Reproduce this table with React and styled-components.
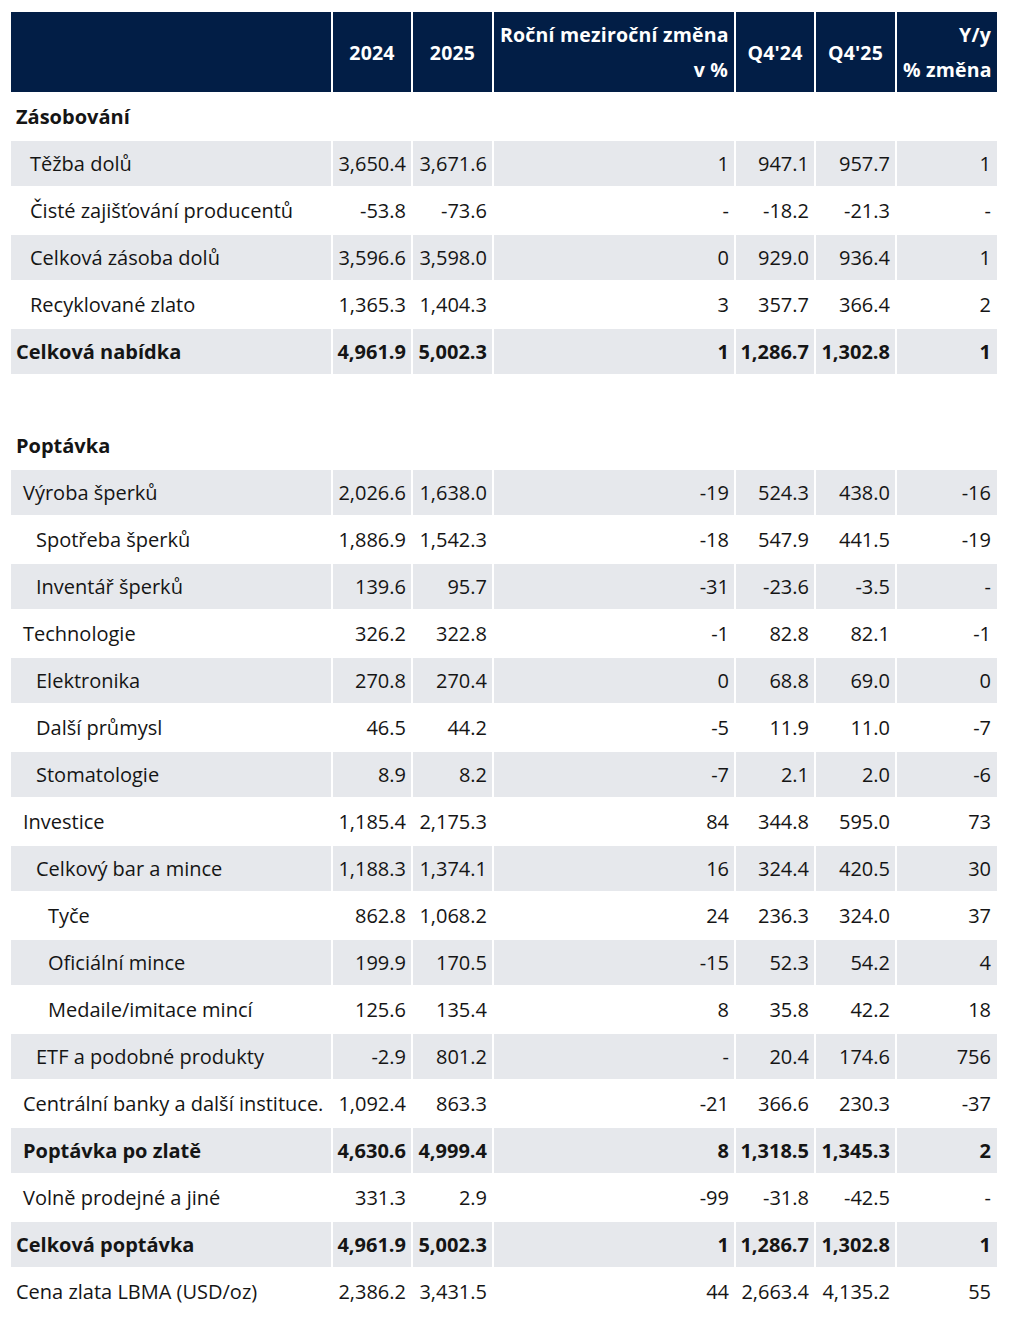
import styled, { createGlobalStyle } from "styled-components";

const GlobalStyle = createGlobalStyle`
  body {
    margin: 0;
    background: #ffffff;
    font-family: "Open Sans", "Noto Sans", sans-serif;
    color: #151515;
  }
`;

const Wrapper = styled.div`
  padding: 10px 0 0 9px;
`;

const Table = styled.table`
  width: 990px;
  table-layout: fixed;
  border-collapse: separate;
  border-spacing: 2px;
  font-size: 20px;
`;

const HeadCell = styled.th`
  height: 80px;
  padding: 0 6px;
  background: #021e46;
  color: #ffffff;
  font-weight: 700;
  font-size: 19.5px;
  letter-spacing: 0.2px;
  line-height: 35px;
  white-space: nowrap;
  text-align: ${(p) => p.$align || "center"};
  vertical-align: middle;
`;

const Row = styled.tr`
  td {
    background: ${(p) => (p.$shaded ? "#e6e8ec" : "#ffffff")};
    font-weight: ${(p) => (p.$bold ? 700 : 400)};
  }
`;

const Label = styled.td`
  height: 45px;
  padding: 0 0 0 ${(p) => 5 + (p.$indent || 0)}px;
  white-space: nowrap;
  vertical-align: middle;
`;

const Num = styled.td`
  padding: 0 ${(p) => p.$pad || 5}px 0 0;
  text-align: right;
  white-space: nowrap;
  vertical-align: middle;
`;

const widths = [320, 78, 79, 240, 78, 79, 100];

const rows = [
  { label: "Zásobování", bold: true, section: true },
  { label: "Těžba dolů", indent: 14, shaded: true, v: ["3,650.4", "3,671.6", "1", "947.1", "957.7", "1"] },
  { label: "Čisté zajišťování producentů", indent: 14, v: ["-53.8", "-73.6", "-", "-18.2", "-21.3", "-"] },
  { label: "Celková zásoba dolů", indent: 14, shaded: true, v: ["3,596.6", "3,598.0", "0", "929.0", "936.4", "1"] },
  { label: "Recyklované zlato", indent: 14, v: ["1,365.3", "1,404.3", "3", "357.7", "366.4", "2"] },
  { label: "Celková nabídka", bold: true, shaded: true, v: ["4,961.9", "5,002.3", "1", "1,286.7", "1,302.8", "1"] },
  { label: "", section: true },
  { label: "Poptávka", bold: true, section: true },
  { label: "Výroba šperků", indent: 7, shaded: true, v: ["2,026.6", "1,638.0", "-19", "524.3", "438.0", "-16"] },
  { label: "Spotřeba šperků", indent: 20, v: ["1,886.9", "1,542.3", "-18", "547.9", "441.5", "-19"] },
  { label: "Inventář šperků", indent: 20, shaded: true, v: ["139.6", "95.7", "-31", "-23.6", "-3.5", "-"] },
  { label: "Technologie", indent: 7, v: ["326.2", "322.8", "-1", "82.8", "82.1", "-1"] },
  { label: "Elektronika", indent: 20, shaded: true, v: ["270.8", "270.4", "0", "68.8", "69.0", "0"] },
  { label: "Další průmysl", indent: 20, v: ["46.5", "44.2", "-5", "11.9", "11.0", "-7"] },
  { label: "Stomatologie", indent: 20, shaded: true, v: ["8.9", "8.2", "-7", "2.1", "2.0", "-6"] },
  { label: "Investice", indent: 7, v: ["1,185.4", "2,175.3", "84", "344.8", "595.0", "73"] },
  { label: "Celkový bar a mince", indent: 20, shaded: true, v: ["1,188.3", "1,374.1", "16", "324.4", "420.5", "30"] },
  { label: "Tyče", indent: 32, v: ["862.8", "1,068.2", "24", "236.3", "324.0", "37"] },
  { label: "Oficiální mince", indent: 32, shaded: true, v: ["199.9", "170.5", "-15", "52.3", "54.2", "4"] },
  { label: "Medaile/imitace mincí", indent: 32, v: ["125.6", "135.4", "8", "35.8", "42.2", "18"] },
  { label: "ETF a podobné produkty", indent: 20, shaded: true, v: ["-2.9", "801.2", "-", "20.4", "174.6", "756"] },
  { label: "Centrální banky a další instituce.", indent: 7, v: ["1,092.4", "863.3", "-21", "366.6", "230.3", "-37"] },
  { label: "Poptávka po zlatě", indent: 7, bold: true, shaded: true, v: ["4,630.6", "4,999.4", "8", "1,318.5", "1,345.3", "2"] },
  { label: "Volně prodejné a jiné", indent: 7, v: ["331.3", "2.9", "-99", "-31.8", "-42.5", "-"] },
  { label: "Celková poptávka", bold: true, shaded: true, v: ["4,961.9", "5,002.3", "1", "1,286.7", "1,302.8", "1"] },
  { label: "Cena zlata LBMA (USD/oz)", v: ["2,386.2", "3,431.5", "44", "2,663.4", "4,135.2", "55"] },
];

export default function App() {
  return (
    <Wrapper>
      <GlobalStyle />
      <Table>
        <colgroup>
          {widths.map((w, i) => (
            <col key={i} style={{ width: w }} />
          ))}
        </colgroup>
        <thead>
          <tr>
            <HeadCell />
            <HeadCell>2024</HeadCell>
            <HeadCell>2025</HeadCell>
            <HeadCell $align="right">
              Roční meziroční změna
              <br />v %
            </HeadCell>
            <HeadCell>Q4'24</HeadCell>
            <HeadCell>Q4'25</HeadCell>
            <HeadCell $align="right">
              Y/y
              <br />% změna
            </HeadCell>
          </tr>
        </thead>
        <tbody>
          {rows.map((r, i) => (
            <Row key={i} $shaded={r.shaded} $bold={r.bold}>
              <Label $indent={r.indent}>{r.label}</Label>
              {(r.v || ["", "", "", "", "", ""]).map((val, j) => (
                <Num key={j} $pad={j === 5 ? 6 : 5}>
                  {val}
                </Num>
              ))}
            </Row>
          ))}
        </tbody>
      </Table>
    </Wrapper>
  );
}
